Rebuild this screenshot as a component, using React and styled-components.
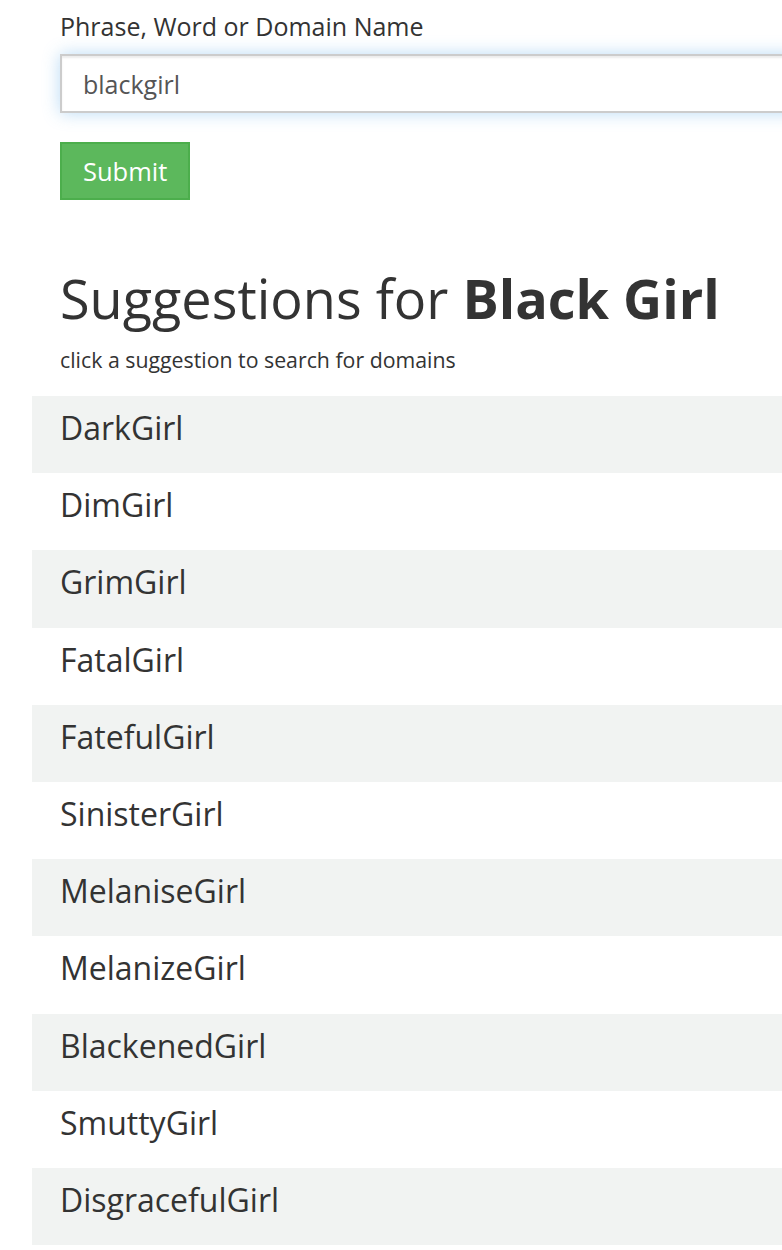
import React from 'react';
import styled, { createGlobalStyle } from 'styled-components';

const GlobalStyle = createGlobalStyle`
  html, body {
    margin: 0;
    padding: 0;
    background: #fff;
    overflow: hidden;
  }
  body {
    font-family: "Open Sans", "Liberation Sans", sans-serif;
    color: #333;
  }
`;

const Page = styled.div`
  width: 1000px;
  padding-top: 9px;
`;

const Form = styled.form`
  padding-left: 60px;
  display: flex;
  flex-direction: column;
  align-items: flex-start;
`;

const Label = styled.label`
  font-size: 25px;
  line-height: 34px;
  color: #333;
  margin-bottom: 11px;
`;

const Input = styled.input`
  box-sizing: border-box;
  width: 100%;
  height: 59px;
  padding: 0 21px;
  font-family: inherit;
  font-size: 25px;
  color: #555;
  background: #fff;
  border: 2px solid #ccc;
  outline: none;
  box-shadow: inset 0 2px 2px rgba(0, 0, 0, 0.075), 0 0 16px rgba(102, 175, 233, 0.45);
`;

const SubmitButton = styled.button`
  box-sizing: border-box;
  margin-top: 29px;
  height: 58px;
  padding: 0 21px;
  font-family: inherit;
  font-size: 25.5px;
  color: #fff;
  background: #5cb85c;
  border: 2px solid #4cae4c;
  border-radius: 0;
`;

const Heading = styled.h1`
  margin: 66px 0 0 60px;
  font-size: 54px;
  line-height: 64px;
  font-weight: 400;
  color: #333;

  strong {
    font-weight: 700;
  }
`;

const Hint = styled.p`
  margin: 16px 0 0 60px;
  font-size: 21.3px;
  line-height: 28px;
`;

const List = styled.ul`
  list-style: none;
  margin: 22px 0 0 32px;
  padding: 0;
`;

const Row = styled.li`
  box-sizing: border-box;
  height: 77.2px;
  padding-left: 28px;
  padding-bottom: 14px;
  display: flex;
  align-items: center;
  font-size: 32px;
  color: #333;
  background: ${(p) => (p.$striped ? '#f1f3f2' : '#fff')};
  cursor: pointer;
`;

const suggestions = [
  'DarkGirl',
  'DimGirl',
  'GrimGirl',
  'FatalGirl',
  'FatefulGirl',
  'SinisterGirl',
  'MelaniseGirl',
  'MelanizeGirl',
  'BlackenedGirl',
  'SmuttyGirl',
  'DisgracefulGirl',
];

const App = () => (
  <Page>
    <GlobalStyle />
    <Form onSubmit={(e) => e.preventDefault()}>
      <Label htmlFor="q">Phrase, Word or Domain Name</Label>
      <Input id="q" defaultValue="blackgirl" />
      <SubmitButton type="submit">Submit</SubmitButton>
    </Form>
    <Heading>
      Suggestions for <strong>Black Girl</strong>
    </Heading>
    <Hint>click a suggestion to search for domains</Hint>
    <List>
      {suggestions.map((s, i) => (
        <Row key={s} $striped={i % 2 === 0}>
          {s}
        </Row>
      ))}
    </List>
  </Page>
);

export default App;
